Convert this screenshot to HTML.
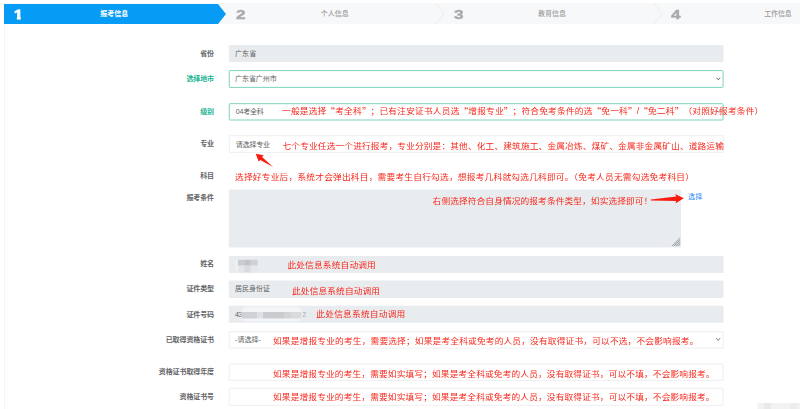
<!DOCTYPE html>
<html lang="zh-CN">
<head>
<meta charset="utf-8">
<title>报考信息</title>
<style>
*{margin:0;padding:0;box-sizing:border-box}
html,body{width:800px;height:409px;overflow:hidden;background:#fff}
body{position:relative;font-family:"Liberation Sans","Noto Sans CJK SC",sans-serif}
.abs{position:absolute}
.t{position:absolute;white-space:nowrap;line-height:14px;height:14px}
.num{font-size:13.2px;line-height:1em;height:1em;font-weight:bold;transform-origin:0 50%;transform:scaleX(1.3);-webkit-text-stroke:0.4px currentColor}
#n1{font-size:13.3px;-webkit-text-stroke:0.8px currentColor;transform:scaleX(1.2);clip-path:polygon(0 0,0.425em 0,0.425em 1em,0.18em 1em,0.18em 0.6em,0 0.6em)}
.q{display:inline-block;font-size:1.35em;width:0.74em;line-height:0;position:relative;top:0.12em}
.q.o{text-align:right}
.q.c{text-align:left}
.ht{font-size:7px;font-weight:bold}
.w{color:#fff}
.g{color:#a9a9a9}
.g2{color:#9c9c9c;font-weight:500}
.lab{font-size:7px;font-weight:bold;color:#636567}
.lab.gr{color:#1ab394}
.val{font-size:7px;color:#5c5e60}
.red{font-size:8.7px;color:#f7281c;transform:scaleY(0.94);transform-origin:0 55%}
.v7{color:#a4a6a8}
.lnk{font-size:7px;color:#1f86f8}
</style>
</head>
<body>
<div class="abs" style="left:4px;top:3px;width:796px;height:21px;background:#f7f8f9"></div>
<div class="abs" style="left:4px;top:24px;width:1px;height:385px;background:#f4f4f4"></div>
<svg class="abs" style="left:0;top:0" width="800" height="30" viewBox="0 0 800 30"><polygon points="4,3.9 218,3.9 226,13.9 218,23.9 4,23.9" fill="#069cf6"/><polyline points="436,3.8 444,13.8 436,23.8" fill="none" stroke="#e9e9e9" stroke-width="0.8"/><polyline points="654,3.8 662,13.8 654,23.8" fill="none" stroke="#e9e9e9" stroke-width="0.8"/></svg>
<svg class="abs" style="left:0;top:0" width="800" height="409" viewBox="0 0 800 409"><rect x="228.8" y="45.1" width="494.8" height="16.8" rx="0.8" fill="#e9ecef"/><rect x="229.3" y="70.6" width="493.8" height="16.8" rx="0.6" fill="#fff" stroke="#7fd3bf" stroke-width="1"/><rect x="229.3" y="103.7" width="493.8" height="16.3" rx="0.6" fill="#fff" stroke="#7fd3bf" stroke-width="1"/><rect x="229.25" y="135.65" width="493.9" height="16.7" rx="0.6" fill="#fff" stroke="#ebeced" stroke-width="0.9"/><rect x="228.8" y="189.5" width="452.2" height="57.9" rx="0.8" fill="#e9ecef"/><rect x="228.8" y="255.9" width="494.8" height="17" rx="0.8" fill="#e9ecef"/><rect x="228.8" y="280.6" width="494.8" height="17.3" rx="0.8" fill="#e9ecef"/><rect x="228.8" y="305.8" width="494.8" height="17" rx="0.8" fill="#e9ecef"/><rect x="229.25" y="331.55" width="493.9" height="16.6" rx="0.6" fill="#fff" stroke="#ecedee" stroke-width="0.9"/><rect x="229.25" y="364.05" width="493.9" height="16.4" rx="0.6" fill="#fff" stroke="#ecedee" stroke-width="0.9"/><rect x="229.25" y="388.35" width="493.9" height="17" rx="0.6" fill="#fff" stroke="#ecedee" stroke-width="0.9"/></svg>
<svg class="abs" style="left:0;top:0" width="800" height="409" viewBox="0 0 800 409"><polyline points="716.5,77.7 718.3,79.8 720.1,77.7" fill="none" stroke="#555" stroke-width="0.9"/><polyline points="716.5,110.2 718.3,112.3 720.1,110.2" fill="none" stroke="#777" stroke-width="0.9"/><polyline points="716.4,143.6 718.2,145.7 720,143.6" fill="none" stroke="#777" stroke-width="0.9"/><polyline points="716.3,338.2 718.2,340.4 720.1,338.2" fill="none" stroke="#6a6a6a" stroke-width="0.9"/><g stroke="#8a8a8a" stroke-width="0.9"><line x1="672" y1="246.2" x2="680.2" y2="238"/><line x1="674" y1="246.2" x2="680.2" y2="240"/><line x1="676" y1="246.2" x2="680.2" y2="242"/><line x1="678" y1="246.2" x2="680.2" y2="244"/></g><polygon points="255.8,153.8 263.6,155.2 262.1,156.9 273.1,166.9 260.3,159.9 258.6,161.4" fill="#fb1a10"/><polygon points="683.8,198.3 675,193.9 676.3,196.4 650.8,199.6 650.8,200.5 676.3,201.1 675.4,203.6" fill="#fb1a10"/><defs><filter id="b" x="-30%" y="-50%" width="160%" height="200%"><feGaussianBlur stdDeviation="1.3"/></filter><filter id="b3"><feGaussianBlur stdDeviation="0.5"/></filter><filter id="b2" x="-30%" y="-50%" width="160%" height="200%"><feGaussianBlur stdDeviation="0.9"/></filter></defs><g filter="url(#b3)"><rect x="757.5" y="403" width="44" height="8" fill="#f2f2f2"/><rect x="764" y="403" width="7" height="8" fill="#e9e9e9"/><rect x="790.5" y="403" width="6.5" height="8" fill="#ececec"/></g></svg>
<b id="n1" class="t num w" style="left:14px;top:8.334px;">1</b>
<span id="h1" class="t ht w" style="left:100.3px;top:6.9px;letter-spacing:0px;">报考信息</span>
<b id="n2" class="t num g" style="left:235.6px;top:8.234px;">2</b>
<span id="h2" class="t ht g2" style="left:320.7px;top:7.1px;letter-spacing:0px;">个人信息</span>
<b id="n3" class="t num g" style="left:454px;top:8.234px;">3</b>
<span id="h3" class="t ht g2" style="left:538.1px;top:7.1px;letter-spacing:0px;">教育信息</span>
<b id="n4" class="t num g" style="left:671.3px;top:8.234px;">4</b>
<span id="h4" class="t ht g2" style="left:764.2px;top:7.1px;letter-spacing:-0.108px;">工作信息</span>
<label id="l0" class="t lab" style="left:200.2px;top:47px;letter-spacing:-0.118px;">省份</label>
<label id="l1" class="t lab gr" style="left:186.4px;top:72px;letter-spacing:-0.108px;">选择地市</label>
<label id="l2" class="t lab gr" style="left:200.2px;top:104.5px;letter-spacing:-0.118px;">级别</label>
<label id="l3" class="t lab" style="left:200.2px;top:137px;letter-spacing:-0.118px;">专业</label>
<label id="l4" class="t lab" style="left:200.2px;top:169.4px;letter-spacing:-0.118px;">科目</label>
<label id="l5" class="t lab" style="left:186.4px;top:191px;letter-spacing:-0.108px;">报考条件</label>
<label id="l6" class="t lab" style="left:200.2px;top:257px;letter-spacing:-0.118px;">姓名</label>
<label id="l7" class="t lab" style="left:186.4px;top:282px;letter-spacing:-0.108px;">证件类型</label>
<label id="l8" class="t lab" style="left:186.4px;top:307.5px;letter-spacing:-0.108px;">证件号码</label>
<label id="l9" class="t lab" style="left:165.7px;top:333px;letter-spacing:-0.104px;">已取得资格证书</label>
<label id="l10" class="t lab" style="left:158.8px;top:365px;letter-spacing:-0.104px;">资格证书取得年度</label>
<label id="l11" class="t lab" style="left:179.5px;top:390px;letter-spacing:-0.106px;">资格证书号</label>
<span id="v0" class="t val" style="left:235px;top:47px;letter-spacing:0.093px;">广东省</span>
<span id="v1" class="t val" style="left:235px;top:72px;letter-spacing:-0.044px;">广东省广州市</span>
<span id="v2" class="t val" style="left:235.75px;top:104.8px;letter-spacing:-0.17px;">04考全科</span>
<span id="v3" class="t val" style="left:235.75px;top:137.5px;letter-spacing:-0.16px;">请选择专业</span>
<span id="v4" class="t val" style="left:235px;top:282.3px;letter-spacing:0px;">居民身份证</span>
<span id="v5" class="t val" style="left:235px;top:333px;letter-spacing:0.07px;">-请选择-</span>
<span id="r1" class="t red" style="left:282px;top:103.6px;letter-spacing:0.2109px;">一般是选择<span class="q o">“</span>考全科<span class="q c">”</span>；已有注安证书人员选<span class="q o">“</span>增报专业<span class="q c">”</span>；符合免考条件的选<span class="q o">“</span>免一科<span class="q c">”</span>/<span class="q o">“</span>免二科<span class="q c">”</span>（对照好报考条件）</span>
<span id="r2" class="t red" style="left:282.5px;top:139.1px;letter-spacing:0.1431px;">七个专业任选一个进行报考，专业分别是：其他、化工、建筑施工、金属冶炼、煤矿、金属非金属矿山、道路运输</span>
<span id="r3" class="t red" style="left:235px;top:169.5px;letter-spacing:0.2256px;">选择好专业后，系统才会弹出科目，需要考生自行勾选，想报考几科就勾选几科即可。（免考人员无需勾选免考科目）</span>
<span id="r4" class="t red" style="left:432.6px;top:193.7px;letter-spacing:0.1055px;">右侧选择符合自身情况的报考条件类型，如实选择即可！</span>
<span id="r5" class="t red" style="left:287.4px;top:258.2px;letter-spacing:0.1712px;">此处信息系统自动调用</span>
<span id="r6" class="t red" style="left:292px;top:284px;letter-spacing:0.1278px;">此处信息系统自动调用</span>
<span id="r7" class="t red" style="left:316.3px;top:307.4px;letter-spacing:0.2352px;">此处信息系统自动调用</span>
<span id="r8" class="t red" style="left:273px;top:333.6px;letter-spacing:0.1777px;">如果是增报专业的考生，需要选择；如果是考全科或免考的人员，没有取得证书，可以不选，不会影响报考。</span>
<span id="r9" class="t red" style="left:273px;top:366.6px;letter-spacing:0.1466px;">如果是增报专业的考生，需要如实填写；如果是考全科或免考的人员，没有取得证书，可以不填，不会影响报考。</span>
<span id="r10" class="t red" style="left:273px;top:390.3px;letter-spacing:0.1466px;">如果是增报专业的考生，需要如实填写；如果是考全科或免考的人员，没有取得证书，可以不填，不会影响报考。</span>
<a id="lk" class="t lnk" style="left:687.9px;top:190.4px;letter-spacing:0.412px;">选择</a>
<span id="v6" class="t val" style="left:235px;top:307.5px;letter-spacing:-0.763px;">43</span>
<span id="v7" class="t val v7" style="left:302.2px;top:307.5px;letter-spacing:-0.58px;">2</span>
<svg class="abs" style="left:0;top:0" width="800" height="409" viewBox="0 0 800 409"><rect x="236" y="259.5" width="21" height="13" rx="4" fill="#f1f2f4" filter="url(#b2)"/><g filter="url(#b3)"><rect x="237.9" y="259.7" width="6.3" height="6" fill="#c9cdd0"/><rect x="244.2" y="259.7" width="6.6" height="6" fill="#c0c4c8"/><rect x="250.8" y="259.7" width="6.8" height="6" fill="#ced1d4"/><rect x="237.9" y="265.7" width="6.3" height="6.8" fill="#e4e6e9"/><rect x="244.2" y="265.7" width="6.6" height="6.8" fill="#d9dcdf"/><rect x="250.8" y="265.7" width="6.8" height="6.8" fill="#e5e7ea"/></g><rect x="241.5" y="307" width="60.5" height="14.5" rx="6" fill="#f4f5f7" filter="url(#b2)"/><g filter="url(#b3)"><rect x="242" y="312" width="15" height="6.5" fill="#cfd2d5"/><rect x="257" y="312" width="6" height="6.5" fill="#dee0e3"/><rect x="263" y="312" width="21" height="6.5" fill="#c9cccf"/><rect x="284" y="312" width="7" height="6.5" fill="#d2d5d8"/><rect x="291" y="312" width="10.5" height="6.5" fill="#d9dbde"/></g></svg>
</body>
</html>
